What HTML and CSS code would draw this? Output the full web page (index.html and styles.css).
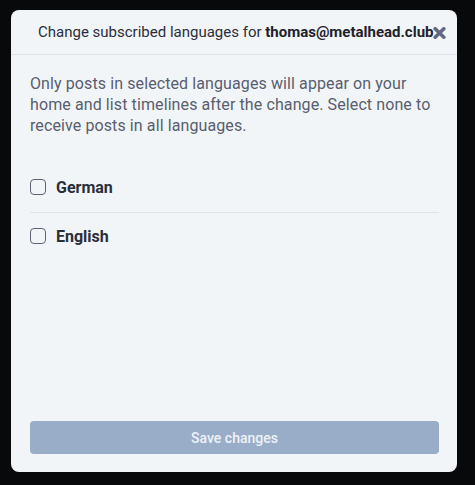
FILE: index.html
```html
<!DOCTYPE html>
<html lang="en">
<head>
<meta charset="utf-8">
<title>Change subscribed languages</title>
<link rel="stylesheet" href="styles.css">
</head>
<body>
<div class="modal">
  <div class="modal-header">
    <span class="modal-title">Change subscribed languages for <strong>thomas@metalhead.club</strong></span>
    <button class="close" aria-label="Close">
      <svg width="13" height="12" viewBox="0 0 13 12"><path d="M2.2 1.8 L10.8 10.2 M10.8 1.8 L2.2 10.2" stroke="#626880" stroke-width="3.6" stroke-linecap="round"/></svg>
    </button>
  </div>
  <div class="modal-body">
    <p class="intro">Only posts in selected languages will appear on your home and list timelines after the change. Select none to receive posts in all languages.</p>
    <ul class="lang-list">
      <li class="lang-item"><span class="check"></span><span class="lang-name">German</span></li>
      <li class="lang-item"><span class="check"></span><span class="lang-name">English</span></li>
    </ul>
    <button class="save" disabled>Save changes</button>
  </div>
</div>
</body>
</html>
```
FILE: styles.css
```css
html, body {
  margin: 0;
  padding: 0;
  background: #08090b;
}
body {
  padding: 10px 0 0 11px;
  font-family: Roboto, "Liberation Sans", sans-serif;
}
.modal {
  width: 446px;
  height: 462px;
  background: #f2f5f8;
  border-radius: 8px;
  display: flex;
  flex-direction: column;
  box-sizing: border-box;
  overflow: hidden;
}
.modal-header {
  height: 45px;
  box-sizing: border-box;
  border-bottom: 1px solid #dde2ea;
  display: flex;
  align-items: center;
  padding: 0 14px 0 27px;
}
.modal-title {
  flex: 1;
  white-space: nowrap;
  font-size: 15px;
  color: #2a2e38;
}
.modal-title strong {
  font-weight: 700;
  color: #1e222b;
}
.close {
  flex-shrink: 0;
  border: 0;
  background: none;
  padding: 0;
  width: 13px;
  height: 12px;
  display: flex;
  margin-top: 1px;
}
.modal-body {
  flex: 1;
  display: flex;
  flex-direction: column;
  padding: 18px 18px 18px 19px;
}
.intro {
  margin: 0;
  font-size: 16px;
  line-height: 21px;
  letter-spacing: 0.1px;
  color: #585e6f;
}
.lang-list {
  list-style: none;
  margin: 27px 0 0;
  padding: 0;
}
.lang-item {
  display: flex;
  align-items: center;
  gap: 10px;
  padding: 14px 0;
  height: 20px;
}
.lang-item:first-child {
  padding-bottom: 15px;
}
.lang-item + .lang-item {
  border-top: 1px solid #dfe4eb;
  padding-top: 13px;
}
.check {
  width: 14px;
  height: 14px;
  border: 1.5px solid #5c6274;
  border-radius: 4px;
  flex-shrink: 0;
}
.lang-name {
  font-size: 16px;
  font-weight: 700;
  color: #2a2e38;
}
.save {
  margin-top: auto;
  height: 33px;
  border: 0;
  border-radius: 4px;
  background: #99adc8;
  color: #eef2f7;
  font-family: Roboto, "Liberation Sans", sans-serif;
  font-size: 14px;
  font-weight: 500;
}
```
